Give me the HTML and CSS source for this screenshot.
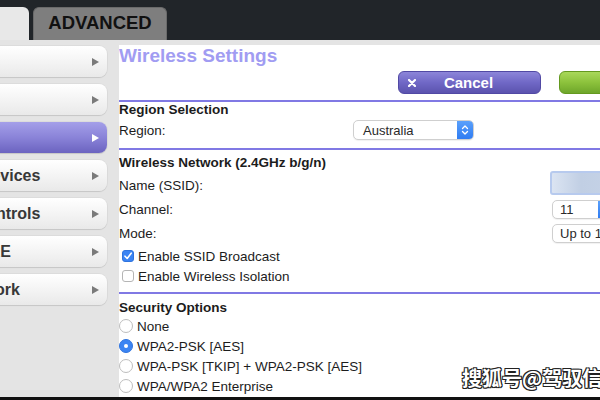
FILE: index.html
```html
<!DOCTYPE html>
<html lang="en">
<head>
<meta charset="utf-8">
<title>Wireless Settings</title>
<link rel="stylesheet" href="styles.css">
</head>
<body>
<div class="page">
  <header class="topbar">
    <div class="tab tab-basic"></div>
    <div class="tab tab-advanced">ADVANCED</div>
  </header>
  <div class="workspace">
    <nav class="sidebar">
      <a class="nav-item"><span class="nav-label">Home</span><span class="nav-arrow"></span></a>
      <a class="nav-item"><span class="nav-label">Internet</span><span class="nav-arrow"></span></a>
      <a class="nav-item is-active"><span class="nav-label">Wireless</span><span class="nav-arrow"></span></a>
      <a class="nav-item"><span class="nav-label">Attached Devices</span><span class="nav-arrow"></span></a>
      <a class="nav-item"><span class="nav-label">Parental Controls</span><span class="nav-arrow"></span></a>
      <a class="nav-item"><span class="nav-label">ReadySHARE</span><span class="nav-arrow"></span></a>
      <a class="nav-item"><span class="nav-label">Guest Network</span><span class="nav-arrow"></span></a>
    </nav>
    <main class="content">
      <h1 class="title">Wireless Settings</h1>
      <div class="actions">
        <button class="btn btn-cancel">
          <svg class="btn-x" width="8" height="8" viewBox="0 0 8 8"><path d="M1 1L7 7M7 1L1 7" stroke="#fff" stroke-width="2.2" stroke-linecap="round"/></svg>
          <span class="btn-text">Cancel</span>
        </button>
        <button class="btn btn-apply"><span class="btn-text">Apply</span></button>
      </div>
      <div class="rule"></div>

      <section class="group">
        <h2 class="group-title">Region Selection</h2>
        <div class="row row-region">
          <span class="label label-region">Region:</span>
          <div class="select select-region">
            <span class="select-value">Australia</span>
            <span class="select-btn"><svg width="8" height="12" viewBox="0 0 8 12"><path d="M1.5 4.5L4 2L6.5 4.5M1.5 7.5L4 10L6.5 7.5" fill="none" stroke="#fff" stroke-width="1.3" stroke-linecap="round" stroke-linejoin="round"/></svg></span>
          </div>
        </div>
      </section>
      <div class="rule rule-mid"></div>

      <section class="group group-pad">
        <h2 class="group-title">Wireless Network (2.4GHz b/g/n)</h2>
        <div class="row row-field row-first">
          <span class="label label-wide">Name (SSID):</span>
          <div class="ssid-input"></div>
        </div>
        <div class="row row-field">
          <span class="label label-wide">Channel:</span>
          <div class="select select-channel">
            <span class="select-value">11</span>
            <span class="select-btn"></span>
          </div>
        </div>
        <div class="row row-field">
          <span class="label label-wide">Mode:</span>
          <div class="select select-mode">
            <span class="select-value">Up to 145 Mbps</span>
          </div>
        </div>
        <div class="row row-check row-check-first">
          <span class="checkbox is-checked"><svg width="10" height="10" viewBox="0 0 10 10"><path d="M2 5.2L4.2 7.5L8.2 2.2" fill="none" stroke="#fff" stroke-width="1.6" stroke-linecap="round" stroke-linejoin="round"/></svg></span>
          <span class="label">Enable SSID Broadcast</span>
        </div>
        <div class="row row-check">
          <span class="checkbox"></span>
          <span class="label">Enable Wireless Isolation</span>
        </div>
      </section>
      <div class="rule rule-low"></div>

      <section class="group group-pad-lg">
        <h2 class="group-title">Security Options</h2>
        <div class="row row-radio"><span class="radio"></span><span class="label">None</span></div>
        <div class="row row-radio"><span class="radio is-checked"></span><span class="label">WPA2-PSK [AES]</span></div>
        <div class="row row-radio"><span class="radio"></span><span class="label">WPA-PSK [TKIP] + WPA2-PSK [AES]</span></div>
        <div class="row row-radio"><span class="radio"></span><span class="label">WPA/WPA2 Enterprise</span></div>
      </section>
    </main>
  </div>
  <div class="footer-bar"></div>
  <div class="watermark">搜狐号@驾驭信息</div>
</div>
</body>
</html>
```
FILE: styles.css
```css
* { box-sizing: border-box; }
html, body { margin: 0; padding: 0; }
body {
  width: 600px;
  height: 400px;
  overflow: hidden;
  font-family: "Liberation Sans", Arial, sans-serif;
  background: #e4e4e4;
}
.page {
  position: relative;
  width: 600px;
  height: 400px;
  display: flex;
  flex-direction: column;
  overflow: hidden;
}

/* top bar */
.topbar {
  height: 40px;
  flex: none;
  background: #212529;
  display: flex;
  align-items: flex-end;
  gap: 4px;
}
.tab {
  height: 33px;
  border-radius: 6px 6px 0 0;
}
.tab-basic {
  margin-left: -100px;
  width: 129px;
  background: #e8e8e8;
}
.tab-advanced {
  width: 134px;
  background: #7e7e7e;
  border: 1px solid #6a6a6a;
  border-bottom: none;
  color: #111;
  font-weight: bold;
  font-size: 18.5px;
  line-height: 29px;
  text-align: center;
}

/* main area */
.workspace {
  flex: 1;
  display: grid;
  grid-template-columns: 119px 1fr;
  background: #e4e4e4;
  min-height: 0;
}
.sidebar {
  padding-top: 6px;
  display: flex;
  flex-direction: column;
  gap: 7px;
  overflow: hidden;
}
.nav-item {
  display: flex;
  align-items: center;
  justify-content: space-between;
  height: 31px;
  width: 217px;
  margin-left: -110px;
  padding: 0 8px 0 17px;
  border-radius: 8px;
  background: linear-gradient(#ffffff, #f3f3f3 55%, #e9e9e9);
  box-shadow: 0 1px 1px rgba(0,0,0,0.10), 0 0 0 1px rgba(0,0,0,0.03);
  color: #383838;
  font-weight: bold;
  font-size: 16px;
  white-space: nowrap;
}
.nav-arrow {
  width: 0;
  height: 0;
  border-left: 7px solid #7a7a7a;
  border-top: 4px solid transparent;
  border-bottom: 4px solid transparent;
}
.nav-item.is-active {
  background: linear-gradient(#a49fe9, #8a83d8 50%, #6b63c0);
  color: #fff;
}
.nav-item.is-active .nav-arrow { border-left-color: #fff; }

.content {
  margin-top: 5px;
  background: #fff;
  overflow: hidden;
  color: #1c1c1c;
  font-size: 13.5px;
}
.title {
  margin: 0;
  font-size: 19px;
  line-height: 22px;
  font-weight: bold;
  color: #a19cf2;
  white-space: nowrap;
}
.actions {
  margin-top: 4px;
  height: 23px;
  padding-left: 279px;
  display: flex;
  gap: 18px;
}
.btn {
  flex: none;
  width: 143px;
  height: 23px;
  border-radius: 6px;
  display: flex;
  align-items: center;
  padding: 0 19px 0 9px;
  font-family: "Liberation Sans", Arial, sans-serif;
  font-weight: bold;
  font-size: 15px;
  color: #fff;
}
.btn-cancel {
  background: linear-gradient(#8c85d9, #7068c6 50%, #5b53ae);
  border: 1px solid #5149a4;
}
.btn-x { flex: none; }
.btn-text { flex: 1; text-align: center; }
.btn-apply {
  background: linear-gradient(#a9d85a, #8cc23c 50%, #6ea62a);
  border: 1px solid #64991f;
  color: transparent;
}
.rule {
  margin-top: 6px;
  height: 2px;
  background: #8079e4;
}
.rule-mid { margin-top: 8px; }
.rule-low { margin-top: 6px; }

.group-title {
  margin: 0;
  font-size: 13.5px;
  line-height: 16px;
  font-weight: bold;
  color: #1c1c1c;
  white-space: nowrap;
}
.group-pad { padding-top: 5px; }
.group-pad-lg { padding-top: 6px; }
.row {
  display: flex;
  align-items: center;
  white-space: nowrap;
}
.row-region { margin-top: 2px; height: 20px; }
.label-region { width: 234px; flex: none; }
.label-wide { width: 433px; flex: none; }
.row-field { height: 24px; }
.row-first { margin-top: 2px; }

.select {
  flex: none;
  display: flex;
  align-items: center;
  background: #fff;
  border: 1px solid #cfcfcf;
  border-radius: 5px;
  box-shadow: 0 1px 1px rgba(0,0,0,0.06);
  overflow: hidden;
  color: #2a2a2a;
  font-size: 13px;
}
.select-value { flex: 1; padding-left: 8px; }
.select-btn {
  flex: none;
  align-self: stretch;
  width: 16px;
  background: linear-gradient(#5aa0fb, #2f7cf2);
  display: flex;
  align-items: center;
  justify-content: center;
}
.select-region { width: 121px; height: 20px; }
.select-region .select-value { padding-left: 9px; }
.select-channel { width: 80px; height: 19px; }
.select-channel .select-value { padding-left: 7px; flex: none; width: 45px; }
.select-mode { width: 150px; height: 19px; }
.select-mode .select-value { padding-left: 7px; }

.ssid-input {
  flex: none;
  margin-left: -2px;
  align-self: flex-start;
  margin-top: -2px;
  width: 120px;
  height: 24px;
  border: 2px solid #b7caee;
  border-radius: 3px;
  background: linear-gradient(90deg, #dbe4f2, #c1cfe4 25%, #c6d3e7 60%, #d5dff0);
}

.row-check { height: 20px; }
.row-check-first { margin-top: 1px; }
.checkbox {
  flex: none;
  width: 12px;
  height: 12px;
  margin: 0 4px 0 3px;
  border: 1px solid #b5b5b5;
  border-radius: 3px;
  background: #fff;
  display: flex;
  align-items: center;
  justify-content: center;
}
.checkbox.is-checked {
  background: #3b84f3;
  border-color: #2f74de;
}
.row-radio { height: 20px; }
.radio {
  flex: none;
  width: 14px;
  height: 14px;
  margin: 0 4px 0 0;
  border: 1px solid #bdbdbd;
  border-radius: 50%;
  background: #fff;
  display: flex;
  align-items: center;
  justify-content: center;
}
.radio.is-checked {
  background: #3b84f3;
  border-color: #2f74de;
}
.radio.is-checked::after {
  content: "";
  width: 4px;
  height: 4px;
  border-radius: 50%;
  background: #fff;
}

.footer-bar {
  height: 3px;
  flex: none;
  background: #111;
}
.watermark {
  position: absolute;
  left: 462px;
  top: 366px;
  font-family: "Noto Sans CJK SC", sans-serif;
  font-weight: bold;
  font-size: 20px;
  line-height: 24px;
  color: #fff;
  white-space: nowrap;
  text-shadow: 1px 1px 0 #222, -1px -1px 0 #222, 1px -1px 0 #222, -1px 1px 0 #222, 0 1px 0 #222, 1px 0 0 #222;
}
```
